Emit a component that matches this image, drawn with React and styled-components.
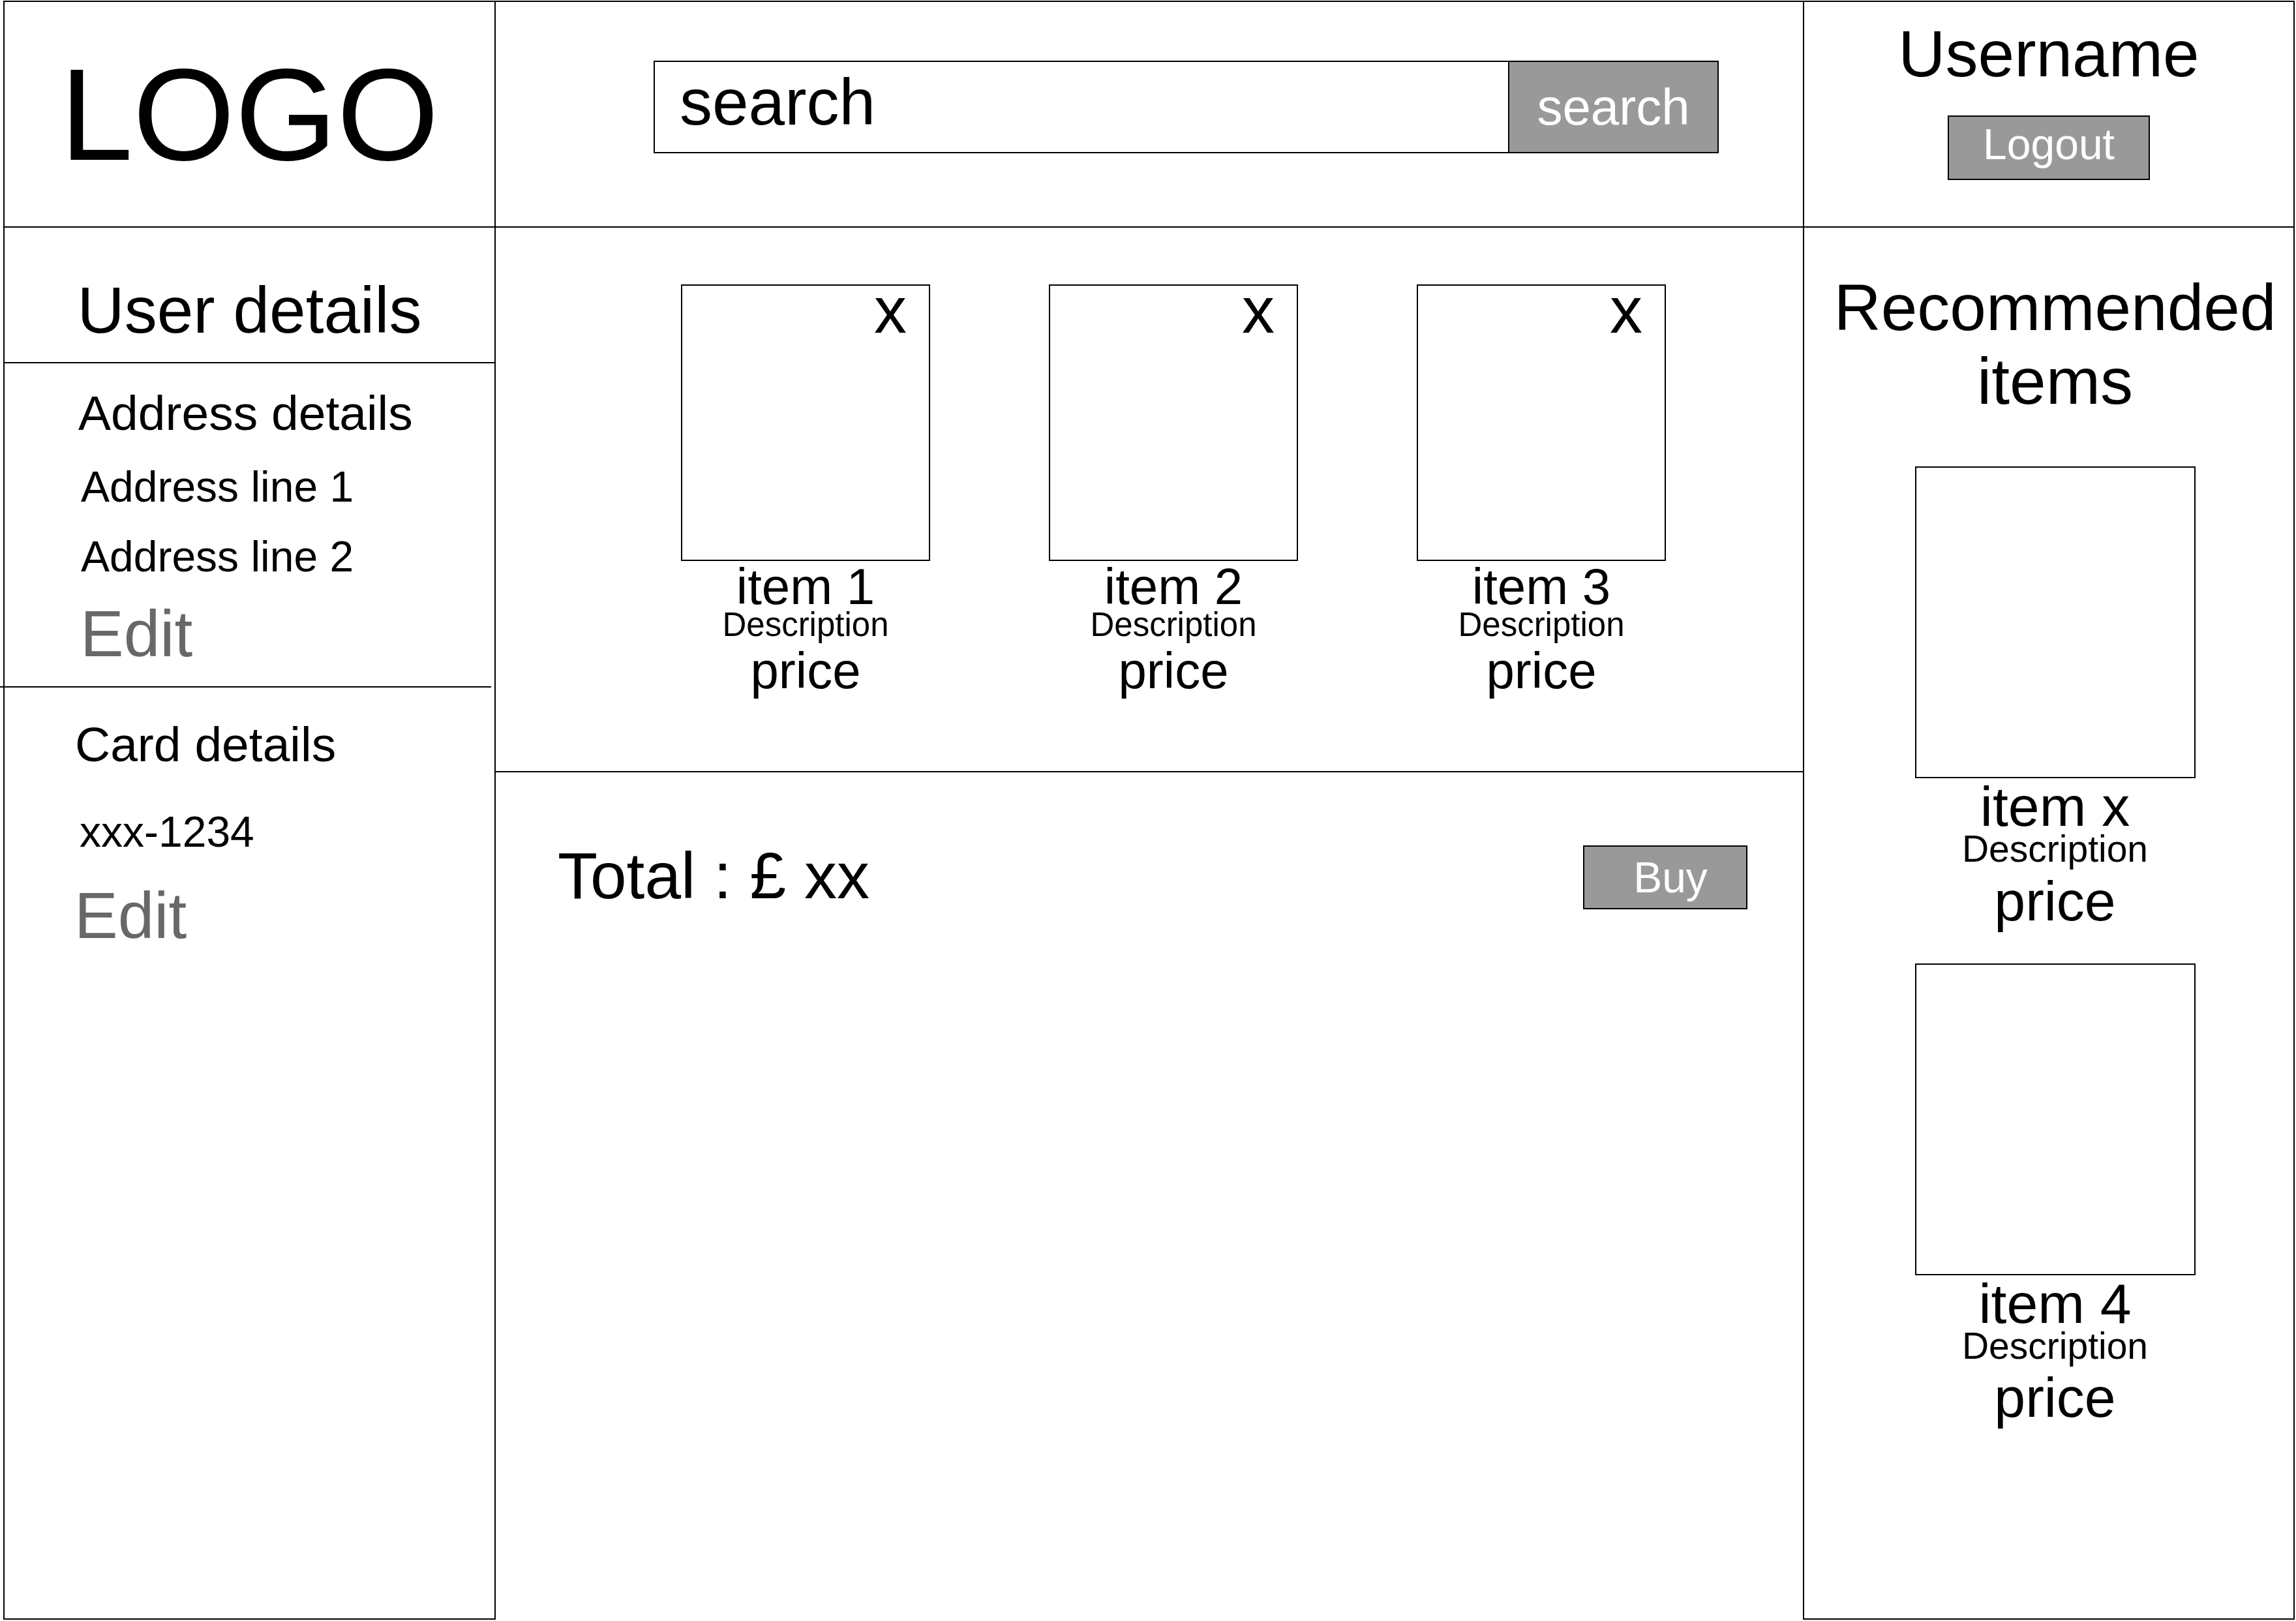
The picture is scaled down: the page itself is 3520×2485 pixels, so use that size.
import styled, { createGlobalStyle } from 'styled-components'

const LINE = '#000'
const GREY = '#999999'

const GlobalStyle = createGlobalStyle`
  html, body {
    margin: 0;
    padding: 0;
    background: #fff;
  }
  body {
    font-family: 'Liberation Sans', Arial, sans-serif;
    color: #000;
  }
  * {
    box-sizing: border-box;
  }
`

const cart = [
  { name: 'item 1', desc: 'Description', price: 'price' },
  { name: 'item 2', desc: 'Description', price: 'price' },
  { name: 'item 3', desc: 'Description', price: 'price' },
]

const recommended = [
  { name: 'item x', desc: 'Description', price: 'price' },
  { name: 'item 4', desc: 'Description', price: 'price' },
]

function ProductCard({ item, $big, removable }) {
  return (
    <Card>
      <Thumb $big={$big}>{removable && <Remove>x</Remove>}</Thumb>
      <ItemName $big={$big}>{item.name}</ItemName>
      <ItemDesc $big={$big}>{item.desc}</ItemDesc>
      <ItemPrice $big={$big}>{item.price}</ItemPrice>
    </Card>
  )
}

function App() {
  return (
    <>
      <GlobalStyle />
      <Page>
        <Frame>
          <LogoCell>
            <Logo>LOGO</Logo>
          </LogoCell>

          <SearchCell>
            <SearchBar>
              <SearchInput>search</SearchInput>
              <SearchButton>search</SearchButton>
            </SearchBar>
          </SearchCell>

          <UserCell>
            <Username>Username</Username>
            <GreyButton $w={310} $h={99} $shift="0 0 12px 0">
              Logout
            </GreyButton>
          </UserCell>

          <SidePanel>
            <PanelTitle>User details</PanelTitle>
            <Details>
              <Line $size={75} $gap={39} $indent={113}>Address details</Line>
              <Line $size={66} $gap={42} $indent={117}>Address line 1</Line>
              <Line $size={66} $gap={41} $indent={117}>Address line 2</Line>
              <EditLink $gap={35} $indent={116}>Edit</EditLink>
              <Rule />
              <Line $size={75} $gap={50} $indent={108}>Card details</Line>
              <Line $size={66} $gap={63} $indent={115}>xxx-1234</Line>
              <EditLink $gap={45} $indent={107}>Edit</EditLink>
            </Details>
          </SidePanel>

          <Main>
            <Basket>
              {cart.map((item) => (
                <ProductCard key={item.name} item={item} removable />
              ))}
            </Basket>
            <Checkout>
              <Total>Total : £ xx</Total>
              <GreyButton $w={252} $h={98} $shift="0 0 0 16px" style={{ marginTop: 4 }}>
                Buy
              </GreyButton>
            </Checkout>
          </Main>

          <RecPanel>
            <RecTitle>Recommended items</RecTitle>
            <RecList>
              {recommended.map((item) => (
                <ProductCard key={item.name} item={item} $big />
              ))}
            </RecList>
          </RecPanel>
        </Frame>
      </Page>
    </>
  )
}

const Page = styled.div`
  width: 3520px;
  height: 2485px;
  padding: 1px 0 0 5px;
  background: #fff;
`

const Frame = styled.div`
  display: grid;
  grid-template-columns: 753px 2006px 752px;
  grid-template-rows: 346px 2134px;
  width: fit-content;
  border-top: 2px solid ${LINE};
  border-left: 2px solid ${LINE};
`

const Cell = styled.div`
  border-right: 2px solid ${LINE};
  border-bottom: 2px solid ${LINE};
  display: flex;
`

const LogoCell = styled(Cell)`
  align-items: center;
  justify-content: center;
`

const Logo = styled.h1`
  margin: 0;
  font-size: 201px;
  font-weight: 400;
  line-height: 1;
`

const SearchCell = styled(Cell)`
  align-items: flex-start;
  padding: 90px 0 0 242px;
`

const SearchBar = styled.div`
  display: flex;
  height: 142px;
`

const SearchInput = styled.div`
  width: 1310px;
  height: 100%;
  border: 2px solid ${LINE};
  border-right: 0;
  padding: 11px 0 0 38px;
  font-size: 100px;
  line-height: 1;
`

const SearchButton = styled.div`
  width: 323px;
  height: 100%;
  border: 2px solid ${LINE};
  background: ${GREY};
  color: #fff;
  font-size: 78px;
  line-height: 1;
  display: flex;
  align-items: center;
  justify-content: center;
`

const UserCell = styled(Cell)`
  flex-direction: column;
  align-items: center;
  padding-top: 29px;
`

const Username = styled.div`
  font-size: 100px;
  line-height: 1;
`

const GreyButton = styled.div`
  width: ${(p) => p.$w}px;
  height: ${(p) => p.$h}px;
  margin-top: 45px;
  padding: ${(p) => p.$shift || 0};
  border: 2px solid ${LINE};
  background: ${GREY};
  color: #fff;
  font-size: 66px;
  line-height: 1;
  display: flex;
  align-items: center;
  justify-content: center;
  flex-shrink: 0;
`

const SidePanel = styled(Cell)`
  flex-direction: column;
`

const PanelTitle = styled.h2`
  margin: 0;
  height: 208px;
  padding-top: 76px;
  border-bottom: 2px solid ${LINE};
  font-size: 100px;
  font-weight: 400;
  line-height: 1;
  text-align: center;
`

const Details = styled.div`
  display: flex;
  flex-direction: column;
  align-items: flex-start;
`

const Line = styled.div`
  margin-top: ${(p) => p.$gap}px;
  padding-left: ${(p) => p.$indent}px;
  font-size: ${(p) => p.$size}px;
  line-height: 1;
`

const EditLink = styled(Line)`
  font-size: 100px;
  color: #686868;
  cursor: pointer;
`

const Rule = styled.hr`
  margin: 31px 0 0 -7px;
  width: 753px;
  height: 2px;
  border: 0;
  background: ${LINE};
`

const Main = styled.div`
  display: flex;
  flex-direction: column;
  border-right: 2px solid ${LINE};
`

const Basket = styled.div`
  height: 835px;
  display: flex;
  gap: 182px;
  padding: 87px 0 0 284px;
  border-bottom: 2px solid ${LINE};
`

const Card = styled.div`
  display: flex;
  flex-direction: column;
  align-items: center;
`

const Thumb = styled.div`
  position: relative;
  width: ${(p) => (p.$big ? 430 : 382)}px;
  height: ${(p) => (p.$big ? 478 : 424)}px;
  border: 2px solid ${LINE};
`

const Remove = styled.span`
  position: absolute;
  top: -13px;
  right: 34px;
  font-size: 100px;
  line-height: 1;
  cursor: pointer;
`

const ItemName = styled.div`
  font-size: ${(p) => (p.$big ? 86 : 78)}px;
  line-height: 1;
`

const ItemDesc = styled.div`
  font-size: ${(p) => (p.$big ? 57 : 51)}px;
  line-height: 0.8;
`

const ItemPrice = styled.div`
  margin-top: ${(p) => (p.$big ? 13 : 10)}px;
  font-size: ${(p) => (p.$big ? 86 : 78)}px;
  line-height: 1;
`

const Checkout = styled.div`
  display: flex;
  justify-content: space-between;
  align-items: flex-start;
  padding: 108px 85px 0 95px;
`

const Total = styled.div`
  font-size: 100px;
  line-height: 1;
`

const RecPanel = styled(Cell)`
  flex-direction: column;
  align-items: center;
  padding: 66px 0 0 19px;
`

const RecTitle = styled.h2`
  margin: 0;
  font-size: 100px;
  font-weight: 400;
  line-height: 113px;
  text-align: center;
`

const RecList = styled.div`
  margin-top: 74px;
  display: flex;
  flex-direction: column;
  align-items: center;
  gap: 53px;
`

export default App
